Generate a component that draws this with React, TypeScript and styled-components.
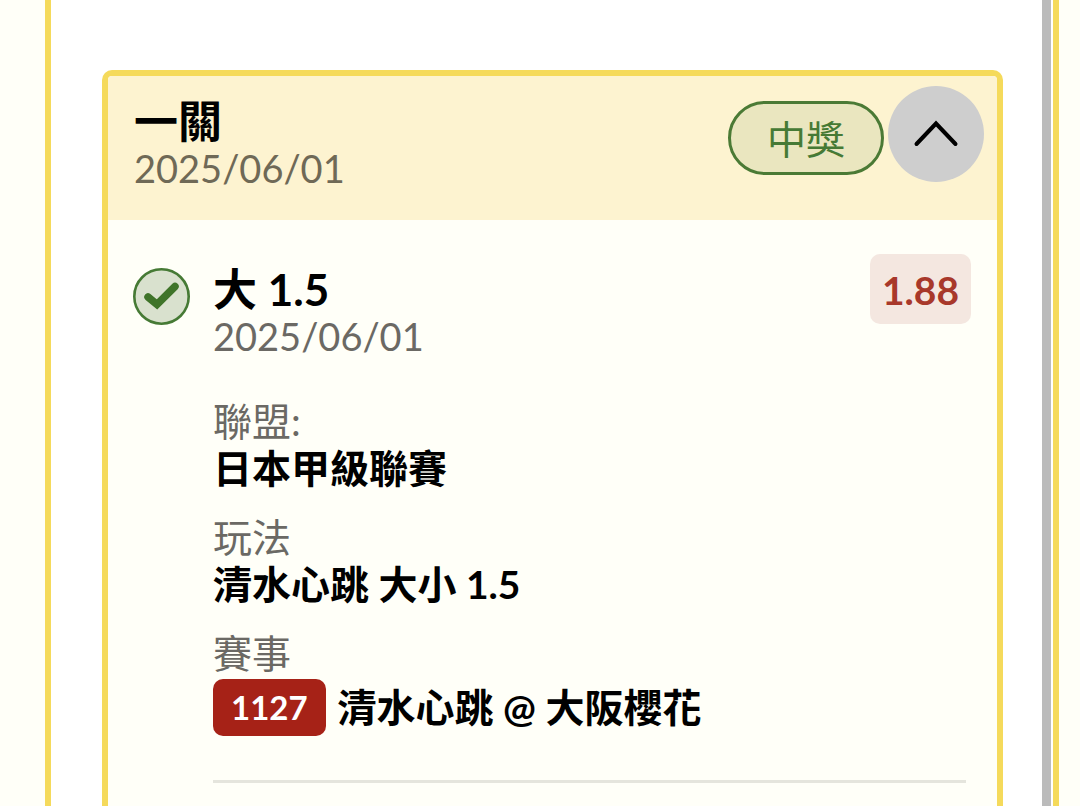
import React, { useState } from "react";
import styled, { createGlobalStyle } from "styled-components";

const GlobalStyle = createGlobalStyle`
  *, *::before, *::after { box-sizing: border-box; }
  body {
    margin: 0;
    background: #fffff8;
    color: #000;
    font-family: Lato, "Noto Sans CJK TC", sans-serif;
    font-size: 39px;
    line-height: 47px;
  }
  h2, h3, p, dl, dt, dd { margin: 0; }
`;

const Page = styled.main`
  display: flex;
  min-height: 100vh;
  padding: 0 21px 0 45px;
`;

const Panel = styled.section`
  display: flex;
  flex: 1;
  min-width: 0;
  padding-right: 2px;
  background: #fff;
  border: solid #f5da5b;
  border-width: 0 6px;
`;

const PanelContent = styled.div`
  display: flex;
  flex: 1;
  min-width: 0;
  padding: 70px 39px 0 51px;
`;

const ScrollThumb = styled.div`
  flex: none;
  width: 9px;
  background: #bbbbbb;
`;

const Card = styled.article`
  flex: 1;
  min-width: 0;
  overflow: hidden;
  background: #fffff8;
  border: 6px solid #f5da5b;
  border-bottom: 0;
  border-radius: 10px 10px 0 0;
`;

const CardHeader = styled.header`
  display: flex;
  justify-content: space-between;
  align-items: flex-start;
  padding: 10px 13px 28px 26px;
  background: #fdf3d0;
`;

const Heading = styled.div`
  padding-top: 12px;
`;

const Title = styled.h2`
  font-size: 44px;
  font-weight: 700;
  line-height: 47px;
`;

const DateText = styled.p<{ $tone: string }>`
  color: ${(p) => p.$tone};
  font-size: 38px;
`;

const Actions = styled.div`
  display: flex;
  align-items: flex-start;
  gap: 4px;
`;

const StatusPill = styled.span`
  margin-top: 15px;
  padding: 12px 36px 9px;
  color: #467a35;
  background: #eae6bf;
  border: 3px solid #4b7a35;
  border-radius: 37px;
  white-space: nowrap;
`;

const ToggleButton = styled.button`
  display: grid;
  place-items: center;
  width: 96px;
  height: 96px;
  padding: 0;
  background: #cecece;
  border: 0;
  border-radius: 50%;
  cursor: pointer;
`;

const Bet = styled.div`
  display: flex;
  align-items: flex-start;
  padding: 34px 26px 0 25px;
`;

const StatusIcon = styled.svg`
  flex: none;
  margin: 14px 23px 0 0;
`;

const BetBody = styled.div`
  flex: 1;
  min-width: 0;
`;

const BetTop = styled.div`
  display: flex;
  align-items: flex-start;
  justify-content: space-between;
`;

const Odds = styled.strong`
  padding: 13px 12px 10px;
  color: #a8382a;
  background: #f4e7e0;
  border-radius: 10px;
  font-weight: 700;
`;

const Details = styled.dl`
  display: grid;
  gap: 22px;
  margin: 38px 5px 0 0;
  padding-bottom: 44px;
  border-bottom: 3px solid #e5e5dd;
`;

const Label = styled.dt`
  color: #6b6964;
`;

const Value = styled.dd`
  font-weight: 700;
`;

const Match = styled.div`
  display: flex;
  align-items: center;
  gap: 12px;
  padding-top: 2px;
`;

const MatchNumber = styled.span`
  padding: 5px 18px;
  color: #fff;
  background: #a62217;
  border-radius: 10px;
  font-size: 33px;
`;

export default function App() {
  const [open, setOpen] = useState(true);
  return (
    <>
      <GlobalStyle />
      <Page>
        <Panel>
          <PanelContent>
            <Card>
              <CardHeader>
                <Heading>
                  <Title>一關</Title>
                  <DateText $tone="#6f6956">2025/06/01</DateText>
                </Heading>
                <Actions>
                  <StatusPill>中獎</StatusPill>
                  <ToggleButton
                    type="button"
                    aria-label="一關"
                    aria-expanded={open}
                    onClick={() => setOpen(!open)}
                  >
                    <svg width="48" height="30" viewBox="0 0 48 30" fill="none" aria-hidden="true">
                      <path
                        d={open ? "M4.5 25 24 4.500 43.500 25" : "M4 4l20 21L44 4"}
                        stroke="#000"
                        strokeWidth="4"
                        strokeLinecap="round"
                      />
                    </svg>
                  </ToggleButton>
                </Actions>
              </CardHeader>
              {open && (
                <Bet>
                  <StatusIcon width="57" height="57" viewBox="0 0 57 57" fill="none" aria-hidden="true">
                    <circle cx="28.5" cy="28.5" r="27.2" fill="#d9e1ce" stroke="#467a35" strokeWidth="2.6" />
                    <path d="M15 29 24 36.500 42 18.500" stroke="#3f7429" strokeWidth="7.5" strokeLinecap="round" />
                  </StatusIcon>
                  <BetBody>
                    <BetTop>
                      <Heading>
                        <Title as="h3">大 1.5</Title>
                        <DateText $tone="#6b6964">2025/06/01</DateText>
                      </Heading>
                      <Odds>1.88</Odds>
                    </BetTop>
                    <Details>
                      <div>
                        <Label>聯盟:</Label>
                        <Value>日本甲級聯賽</Value>
                      </div>
                      <div>
                        <Label>玩法</Label>
                        <Value>清水心跳 大小 1.5</Value>
                      </div>
                      <div>
                        <Label>賽事</Label>
                        <Value>
                          <Match>
                            <MatchNumber>1127</MatchNumber>
                            <span>清水心跳 @ 大阪櫻花</span>
                          </Match>
                        </Value>
                      </div>
                    </Details>
                  </BetBody>
                </Bet>
              )}
            </Card>
          </PanelContent>
          <ScrollThumb />
        </Panel>
      </Page>
    </>
  );
}
